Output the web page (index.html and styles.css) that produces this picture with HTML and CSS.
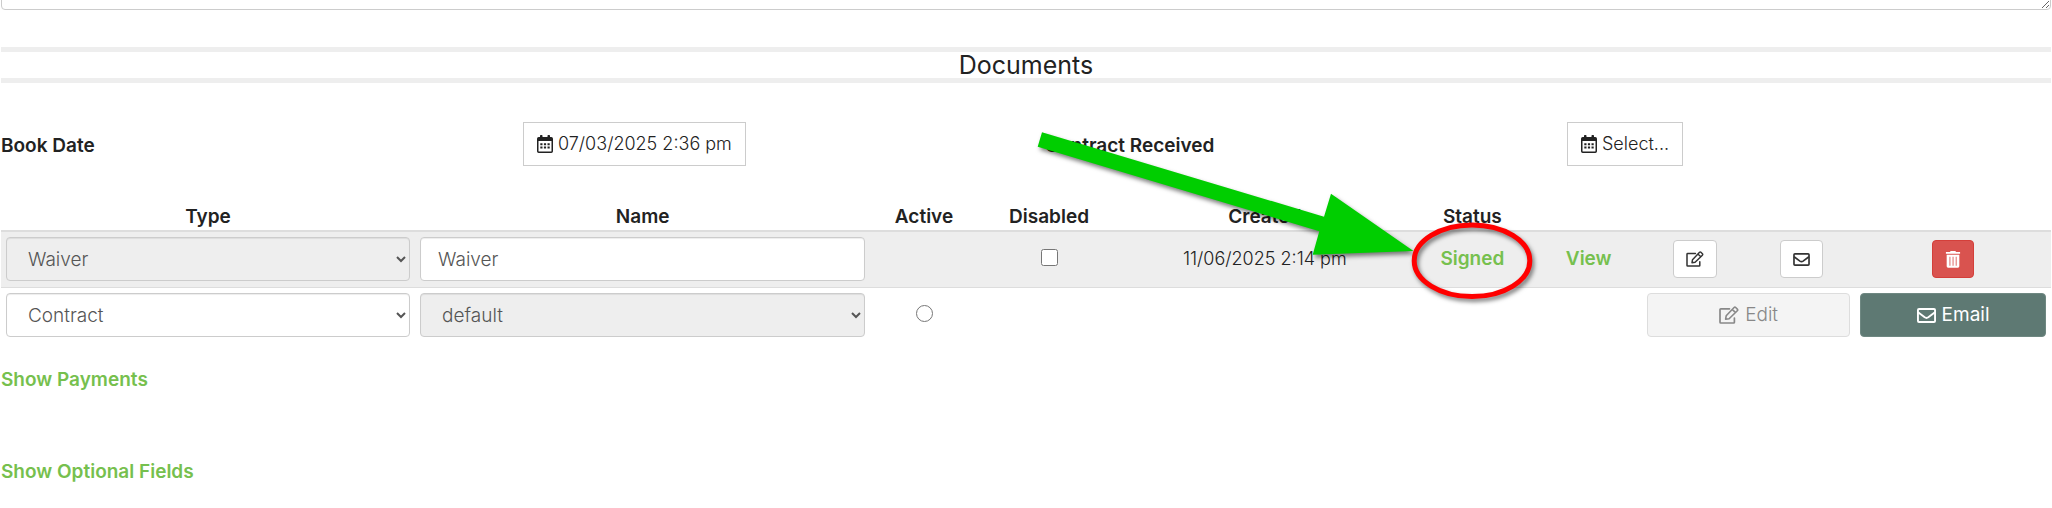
FILE: index.html
```html
<!DOCTYPE html>
<html lang="en">
<head>
    <meta charset="UTF-8">
    <meta name="viewport" content="width=device-width, initial-scale=1.0">
    <title>Documents</title>
    <link rel="stylesheet" href="styles.css">
</head>
<body>
    <!-- shared icons -->
    <svg class="sprite" aria-hidden="true">
        <symbol id="icon-calendar" viewBox="0 0 16 18">
            <path fill="currentColor" fill-rule="evenodd" d="M3 0.8Q3 0 3.8 0h.9q.8 0 .8.8V2h5V.8q0-.8.8-.8h.9q.8 0 .8.8V2h1.300Q16 2 16 3.700v12.600Q16 18 14.300 18H1.700Q0 18 0 16.300V3.700Q0 2 1.700 2H3zM1.500 6v10q0 .5.5.5h12q.5 0 .5-.5V6z"/>
            <path fill="currentColor" d="M3.300 8.200h2.200v2H3.300zm3.600 0h2.200v2H6.900zm3.600 0h2.200v2h-2.200zM3.300 11.600h2.200v2H3.300zm3.600 0h2.200v2H6.900zm3.600 0h2.200v2h-2.200z"/>
        </symbol>
        <symbol id="icon-edit" viewBox="0 0 20 18">
            <path fill="none" stroke="currentColor" stroke-width="1.700" stroke-linejoin="round" stroke-linecap="round" d="M10.500 2.800H1.800Q1 2.800 1 3.600v12.600q0 .8.8.8h12.800q.8 0 .8-.8v-4.200"/>
            <path fill="none" stroke="currentColor" stroke-width="1.600" stroke-linejoin="round" d="M6.600 13.200l.6-3.400 7.900-8.300q.8-.8 1.600 0l1.600 1.600q.8.8 0 1.600l-8.200 8zM13.300 3.400l3.200 3.200"/>
        </symbol>
        <symbol id="icon-mail" viewBox="0 0 18 14">
            <rect x="0.900" y="0.900" width="16.200" height="12.200" rx="1" fill="none" stroke="currentColor" stroke-width="1.800"/>
            <path fill="none" stroke="currentColor" stroke-width="1.800" stroke-linejoin="round" d="M1 4l6.300 4.700q1.700 1.200 3.400 0L17 4"/>
        </symbol>
        <symbol id="icon-trash" viewBox="0 0 16 18">
            <path fill="currentColor" d="M.5 1h4.300l.7-1h5l.7 1h4.300v1.800H.5z"/>
            <path fill="currentColor" fill-rule="evenodd" d="M1.300 4h13.400v12.200q0 1.500-1.500 1.500H2.800q-1.500 0-1.500-1.500zm3 2v9.500h.9V6zm3.300 0v9.500h.9V6zm3.300 0v9.500h.9V6z"/>
        </symbol>
    </svg>

    <div class="page">
        <textarea class="notes" aria-label="Notes"></textarea>

        <h2 class="section-title">Documents</h2>

        <div class="dates">
            <label class="date-label" for="book-date">Book Date</label>
            <div>
                <button type="button" class="btn-date" id="book-date"><svg class="icon-cal"><use href="#icon-calendar"/></svg>07/03/2025 2:36 pm</button>
            </div>
            <label class="date-label" for="contract-received">Contract Received</label>
            <div>
                <button type="button" class="btn-date" id="contract-received"><svg class="icon-cal"><use href="#icon-calendar"/></svg>Select...</button>
            </div>
        </div>

        <table class="documents">
            <colgroup>
                <col class="col-type">
                <col class="col-name">
                <col class="col-active">
                <col class="col-disabled">
                <col class="col-created">
                <col class="col-status">
                <col class="col-action">
                <col class="col-action">
                <col class="col-action">
                <col class="col-last">
            </colgroup>
            <thead>
                <tr>
                    <th>Type</th>
                    <th>Name</th>
                    <th>Active</th>
                    <th>Disabled</th>
                    <th>Created</th>
                    <th>Status</th>
                    <th></th>
                    <th></th>
                    <th></th>
                    <th></th>
                </tr>
            </thead>
            <tbody>
                <tr class="striped">
                    <td>
                        <select class="form-control" aria-label="Type" disabled>
                            <option>Waiver</option>
                        </select>
                    </td>
                    <td><input type="text" class="form-control" aria-label="Name" value="Waiver"></td>
                    <td></td>
                    <td><input type="checkbox" class="check" aria-label="Disabled"></td>
                    <td class="created">11/06/2025 2:14 pm</td>
                    <td><a href="#">Signed</a></td>
                    <td><a href="#">View</a></td>
                    <td><button type="button" class="btn btn-sm" aria-label="Edit"><svg class="icon-edit"><use href="#icon-edit"/></svg></button></td>
                    <td><button type="button" class="btn btn-sm" aria-label="Email"><svg class="icon-mail"><use href="#icon-mail"/></svg></button></td>
                    <td><button type="button" class="btn btn-sm btn-danger" aria-label="Delete"><svg class="icon-trash"><use href="#icon-trash"/></svg></button></td>
                </tr>
                <tr>
                    <td>
                        <select class="form-control" aria-label="Type">
                            <option>Contract</option>
                        </select>
                    </td>
                    <td>
                        <select class="form-control" aria-label="Name" disabled>
                            <option>default</option>
                        </select>
                    </td>
                    <td><input type="radio" class="check" name="active" aria-label="Active"></td>
                    <td></td>
                    <td></td>
                    <td></td>
                    <td></td>
                    <td colspan="2"><button type="button" class="btn btn-block" disabled><svg class="icon-edit"><use href="#icon-edit"/></svg>Edit</button></td>
                    <td><button type="button" class="btn btn-block btn-primary"><svg class="icon-mail"><use href="#icon-mail"/></svg>Email</button></td>
                </tr>
            </tbody>
        </table>

        <div class="toggles">
            <a href="#">Show Payments</a>
            <a href="#">Show Optional Fields</a>
        </div>

        
        <svg class="callout" viewBox="1030 125 520 190" aria-hidden="true">
            <path class="callout-arrow" d="M1042 132.300L1324 216.700l7-23 82.500 57.300-100.800 3.700 6.600-23.400L1037.700 146.700z"/>
            <ellipse class="callout-ring" cx="1472" cy="260.700" rx="57.800" ry="35.800"/>
        </svg>
    </div>
</body>
</html>
```
FILE: styles.css
```css
* {
    box-sizing: border-box;
}

body {
    margin: 0;
    background: #fff;
    color: #222;
    font-family: Inter, 'Liberation Sans', sans-serif;
    font-size: 19px;
    font-weight: 300;
    line-height: 26px;
}

a {
    color: #76c04e;
    font-weight: 600;
    text-decoration: none;
}

.sprite {
    display: none;
}

.page {
    position: relative;
    padding: 0 1px;
    overflow: hidden;
}

.notes {
    display: block;
    width: 100%;
    height: 60px;
    margin-top: -50px;
    border: 1px solid #ccc;
    border-radius: 4px;
    resize: vertical;
}

.section-title {
    margin: 37px 0 39px;
    border-top: 5px solid #eee;
    border-bottom: 5px solid #eee;
    font-size: 25px;
    font-weight: 400;
    line-height: 26px;
    text-align: center;
}

.dates {
    display: grid;
    grid-template-columns: repeat(4, 1fr);
    column-gap: 38px;
    align-items: center;
    margin-bottom: 34px;
}

.date-label {
    padding-top: 4px;
    font-weight: 600;
}

.btn-date {
    display: inline-flex;
    align-items: center;
    gap: 5px;
    height: 44px;
    padding: 0 13px;
    border: 1px solid #ccc;
    background: #fff;
    color: #222;
    font: inherit;
    font-size: 18px;
    vertical-align: top;
}

.documents {
    width: 100%;
    table-layout: fixed;
    border-collapse: separate;
    border-spacing: 0;
    text-align: center;
}

.col-type { width: 20.2%; }
.col-name { width: 22.2%; }
.col-active { width: 5.25%; }
.col-disabled { width: 6.95%; }
.col-created { width: 14.1%; }
.col-status { width: 6.15%; }
.col-action { width: 5.2%; }
.col-last { width: 9.55%; }

.documents th {
    padding: 4px 5px 0;
    border-bottom: 2px solid #ddd;
    font-weight: 600;
    vertical-align: bottom;
}

.documents td {
    padding: 5px 5px 6px;
    vertical-align: middle;
}

.documents .created {
    font-size: 18px;
}

.striped td {
    background: #eee;
    border-bottom: 1px solid #ddd;
}

.form-control {
    display: block;
    width: 100%;
    height: 44px;
    padding: 6px 17px;
    border: 1px solid #ccc;
    border-radius: 4px;
    background-color: #fff;
    box-shadow: inset 0 1px 1px rgba(0, 0, 0, 0.075);
    color: #555;
    font: inherit;
}

.form-control:disabled {
    background-color: #eee;
    opacity: 1;
}

.check {
    display: block;
    width: 17px;
    height: 17px;
    margin: 0 auto 3px;
}

.btn {
    display: inline-flex;
    align-items: center;
    justify-content: center;
    gap: 6px;
    border: 1px solid #ccc;
    border-radius: 4px;
    background: #fff;
    color: #333;
    font: inherit;
    vertical-align: middle;
}

.btn:disabled {
    border-color: #ddd;
    background: #f4f4f4;
    color: #888;
}

.btn-sm {
    height: 38px;
    padding: 0 12px;
}

.btn-block {
    width: 100%;
    height: 44px;
}

.btn-danger {
    border-color: #d43f3a;
    background: #d9534f;
    color: #fff;
}

.btn-primary {
    border-color: #6f8882;
    background: #5e7973;
    color: #fff;
    font-weight: 400;
}

.icon-cal {
    width: 16px;
    height: 18px;
}

.icon-edit {
    width: 20px;
    height: 18px;
}

.icon-mail {
    width: 19px;
    height: 15px;
}

.icon-trash {
    width: 16px;
    height: 17px;
}

.btn-sm .icon-edit {
    width: 18px;
    height: 16px;
}

.btn-sm .icon-mail {
    width: 17px;
    height: 13px;
}

.toggles {
    display: flex;
    flex-direction: column;
    align-items: flex-start;
    gap: 66px;
    padding: 24px 0;
}

.callout {
    position: absolute;
    top: 125px;
    left: 1030px;
    width: 520px;
    height: 190px;
    pointer-events: none;
    filter: drop-shadow(2px 3px 2px rgba(0, 0, 0, 0.5));
}

.callout-arrow {
    fill: #00ce00;
}

.callout-ring {
    fill: none;
    stroke: #f00;
    stroke-width: 5px;
}
```
